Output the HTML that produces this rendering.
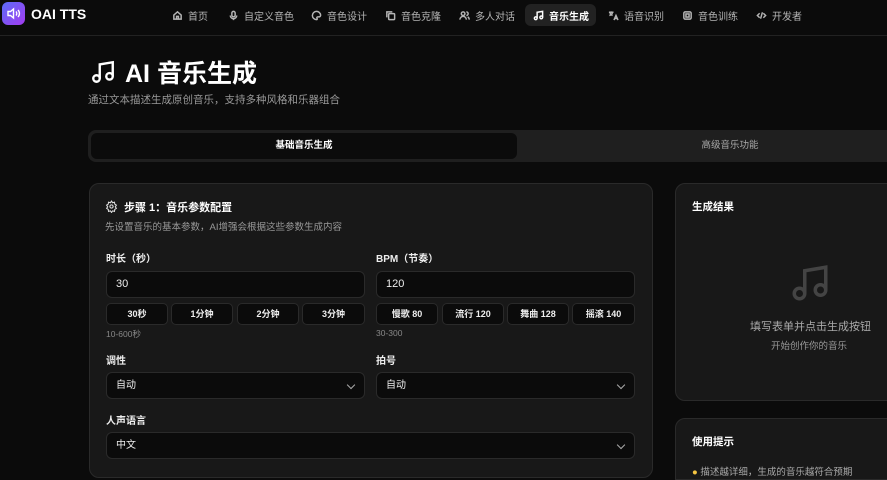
<!DOCTYPE html>
<html><head><meta charset="utf-8"><style>
*{box-sizing:border-box;margin:0;padding:0}
html{width:887px;height:480px;overflow:hidden}
body{width:887px;height:480px;overflow:hidden;background:#0b0b0b;font-family:"Liberation Sans","Noto Sans CJK SC",sans-serif;color:#e8e8e8;position:relative}
.abs{position:absolute;white-space:nowrap}
.hdr{left:0;top:0;width:887px;height:36px;border-bottom:1px solid #222;background:#0b0b0b}
.logo{left:2px;top:2px;width:23px;height:23px;border-radius:6px;background:linear-gradient(135deg,#5b6cf8,#a33bf0)}
.nav{top:4px;height:22px;font-size:10px;color:#b5b5b5;display:flex;align-items:center;gap:5px;padding:0 8px;border-radius:6px}
.nav svg{width:11px;height:11px;stroke:#b5b5b5;fill:none;stroke-width:1.6;flex:none}
.nav.act{background:#222;color:#fff;font-weight:bold}
.nav.act svg{stroke:#fff}
.card{background:#181818;border:1px solid #2a2a2a;border-radius:10px}
.lbl{font-size:10px;font-weight:bold;color:#eee}
.inp{background:#0b0b0b;border:1px solid #2a2a2a;border-radius:6px;height:27px;font-size:11px;padding-left:9px;line-height:25px;color:#eee}
.btn{background:#0b0b0b;border:1px solid #2a2a2a;border-radius:5px;height:22px;font-size:9px;font-weight:bold;text-align:center;line-height:20px;color:#eee}
.hint{font-size:8.5px;color:#888}
.chev{position:absolute;right:10px;top:9px;width:6px;height:6px;border-right:1.3px solid #aaa;border-bottom:1.3px solid #aaa;transform:rotate(45deg)}
</style></head><body>
<div class="abs hdr"></div>
<div class="abs logo"><svg width="23" height="23" viewBox="0 0 23 23" fill="none" stroke="#fff" stroke-width="1.4"><path d="M6 9.5h2.5l3-2.5v9l-3-2.5H6z"/><path d="M14 9.5a3 3 0 0 1 0 4M16 8a5 5 0 0 1 0 7"/></svg></div>
<div class="abs" style="left:31px;top:6px;font-size:14px;font-weight:bold;color:#fff">OAI TTS</div>

<div class="abs nav" style="left:164px"><svg viewBox="0 0 12 12"><path d="M2 5.5L6 2l4 3.5V10H2z M5 10V7h2v3"/></svg>首页</div>
<div class="abs nav" style="left:220px"><svg viewBox="0 0 12 12"><rect x="4.2" y="1.5" width="3.6" height="6" rx="1.8"/><path d="M2.5 6a3.5 3.5 0 0 0 7 0M6 9.5v1.5"/></svg>自定义音色</div>
<div class="abs nav" style="left:303px"><svg viewBox="0 0 12 12"><path d="M6 1.5a4.5 4.5 0 1 0 0 9c1 0 1-1 .5-1.5s0-1.5 1-1.5h1.5A2 2 0 0 0 10.5 5.5 4.5 4.5 0 0 0 6 1.5z"/></svg>音色设计</div>
<div class="abs nav" style="left:377px"><svg viewBox="0 0 12 12"><rect x="4" y="4" width="6.5" height="6.5" rx="1"/><path d="M2 8V2h6"/></svg>音色克隆</div>
<div class="abs nav" style="left:451px"><svg viewBox="0 0 12 12"><circle cx="4.5" cy="4" r="2"/><path d="M1 10.5a3.5 3.5 0 0 1 7 0M8 2a2 2 0 0 1 0 4M9.5 7.5a3 3 0 0 1 1.5 3"/></svg>多人对话</div>
<div class="abs nav act" style="left:525px;width:71px"><svg viewBox="0 0 12 12"><path d="M4.5 9V2.5l6-1V8"/><circle cx="3" cy="9" r="1.5"/><circle cx="9" cy="8" r="1.5"/></svg>音乐生成</div>
<div class="abs nav" style="left:600px"><svg viewBox="0 0 12 12"><path d="M1 2.5h5M3.5 1.5v1M2 2.5c.5 2 2 3 3 3.5M5 2.5c-.5 2-2 3-3.5 3.5M6.5 11l2.2-5 2.2 5M7.3 9.3h2.8"/></svg>语音识别</div>
<div class="abs nav" style="left:674px"><svg viewBox="0 0 12 12"><rect x="2" y="2" width="8" height="8" rx="1.5"/><rect x="4.3" y="4.3" width="3.4" height="3.4"/></svg>音色训练</div>
<div class="abs nav" style="left:748px"><svg viewBox="0 0 12 12"><path d="M4 3.5L1.5 6 4 8.5M8 3.5l2.5 2.5L8 8.5M7 2.5L5 9.5"/></svg>开发者</div>

<svg class="abs" style="left:89px;top:59px" width="28" height="26" viewBox="0 0 24 24" fill="none" stroke="#fff" stroke-width="2.2"><path d="M9 18V5l12-2v13"/><circle cx="6" cy="18" r="3"/><circle cx="18" cy="16" r="3"/></svg>
<div class="abs" style="left:125px;top:54px;font-size:25px;font-weight:bold;color:#fff">AI 音乐生成</div>
<div class="abs" style="left:88px;top:92px;font-size:10.5px;color:#999">通过文本描述生成原创音乐，支持多种风格和乐器组合</div>

<div class="abs" style="left:88px;top:130px;width:810px;height:32px;background:#1f1f1f;border-radius:8px"></div>
<div class="abs" style="left:91px;top:133px;width:426px;height:26px;background:#0b0b0b;border-radius:6px;font-size:9.5px;font-weight:bold;text-align:center;line-height:26px;color:#fff">基础音乐生成</div>
<div class="abs" style="left:517px;top:133px;width:426px;height:26px;font-size:9.5px;text-align:center;line-height:26px;color:#aaa">高级音乐功能</div>

<div class="abs card" style="left:89px;top:183px;width:564px;height:295px"></div>
<svg class="abs" style="left:105px;top:200px" width="13" height="13" viewBox="0 0 24 24" fill="none" stroke="#ddd" stroke-width="2"><circle cx="12" cy="12" r="3"/><path d="M12 2l2 3 3.5-1 .5 3.5 3 2-2 3 2 3-3 2-.5 3.5-3.5-1-2 3-2-3-3.5 1L6 17.5l-3-2 2-3-2-3 3-2L6.5 4 10 5z"/></svg>
<div class="abs" style="left:124px;top:199px;font-size:11px;font-weight:bold;color:#fff">步骤 1：音乐参数配置</div>
<div class="abs" style="left:105px;top:219px;font-size:9.5px;color:#999">先设置音乐的基本参数，AI增强会根据这些参数生成内容</div>

<div class="abs lbl" style="left:106px;top:250px">时长（秒）</div>
<div class="abs inp" style="left:106px;top:271px;width:259px">30</div>
<div class="abs btn" style="left:106px;top:303px;width:62px">30秒</div>
<div class="abs btn" style="left:171px;top:303px;width:62px">1分钟</div>
<div class="abs btn" style="left:237px;top:303px;width:62px">2分钟</div>
<div class="abs btn" style="left:302px;top:303px;width:63px">3分钟</div>
<div class="abs hint" style="left:106px;top:328px">10-600秒</div>

<div class="abs lbl" style="left:376px;top:250px">BPM（节奏）</div>
<div class="abs inp" style="left:376px;top:271px;width:259px">120</div>
<div class="abs btn" style="left:376px;top:303px;width:62px">慢歌 80</div>
<div class="abs btn" style="left:442px;top:303px;width:62px">流行 120</div>
<div class="abs btn" style="left:507px;top:303px;width:62px">舞曲 128</div>
<div class="abs btn" style="left:572px;top:303px;width:63px">摇滚 140</div>
<div class="abs hint" style="left:376px;top:328px">30-300</div>

<div class="abs lbl" style="left:106px;top:352px">调性</div>
<div class="abs inp" style="left:106px;top:372px;width:259px;font-size:10px">自动<span class="chev"></span></div>
<div class="abs lbl" style="left:376px;top:352px">拍号</div>
<div class="abs inp" style="left:376px;top:372px;width:259px;font-size:10px">自动<span class="chev"></span></div>

<div class="abs lbl" style="left:106px;top:412px">人声语言</div>
<div class="abs inp" style="left:106px;top:432px;width:529px;font-size:10px">中文<span class="chev"></span></div>

<div class="abs card" style="left:675px;top:183px;width:230px;height:218px"></div>
<div class="abs" style="left:692px;top:199px;font-size:10.5px;font-weight:bold;color:#fff">生成结果</div>
<svg class="abs" style="left:789px;top:262px" width="42" height="42" viewBox="0 0 24 24" fill="none" stroke="#444" stroke-width="2"><path d="M9 18V5l12-2v13"/><circle cx="6" cy="18" r="3"/><circle cx="18" cy="16" r="3"/></svg>
<div class="abs" style="left:750px;top:318px;font-size:11px;color:#aaa">填写表单并点击生成按钮</div>
<div class="abs" style="left:771px;top:338px;font-size:9.5px;color:#999">开始创作你的音乐</div>

<div class="abs card" style="left:675px;top:418px;width:230px;height:62px;border-bottom-left-radius:0;border-bottom-right-radius:0"></div>
<div class="abs" style="left:692px;top:434px;font-size:10.5px;font-weight:bold;color:#fff">使用提示</div>
<div class="abs" style="left:692px;top:464px;font-size:9.5px;color:#aaa"><span style="color:#f5c542">●</span> 描述越详细，生成的音乐越符合预期</div>
</body></html>
